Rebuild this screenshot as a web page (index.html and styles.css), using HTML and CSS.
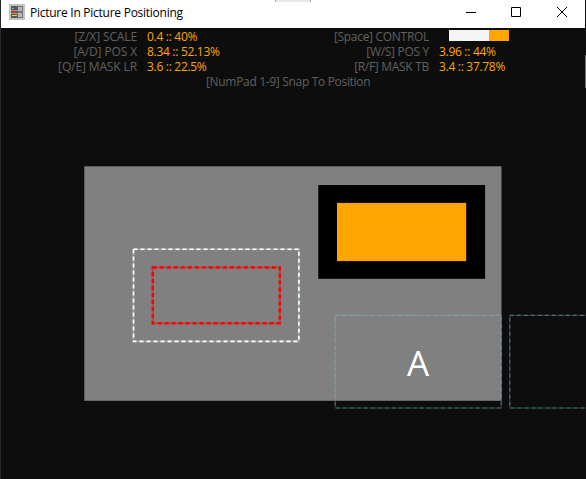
FILE: index.html
```html
<!DOCTYPE html>
<html lang="en">
<head>
<meta charset="utf-8">
<title>Picture In Picture Positioning</title>
<link rel="stylesheet" href="styles.css">
</head>
<body>
<div class="window">
  <header class="titlebar">
    <svg class="app-icon" width="16" height="16" viewBox="0 0 16 16" shape-rendering="crispEdges">
      <rect width="16" height="16" fill="#c3c3c3"/>
      <rect x="2" y="2" width="12" height="12" fill="#777"/>
      <rect x="2" y="2" width="7" height="12" fill="#5a5a5a"/>
      <path d="M9 3h4v4H9zM9 9h4v4H9z" fill="#b5b5b5"/>
      <path d="M2 6.500h7M2 9.500h7" stroke="#999"/>
      <rect x="3" y="4" width="2" height="1" fill="#20d765"/>
      <rect x="5" y="6" width="1" height="3" fill="#dc4050"/>
      <rect x="3" y="11" width="5" height="1" fill="#ffc928"/>
    </svg>
    <h1 class="title">Picture In Picture Positioning</h1>
    <svg class="controls" width="121" height="28" viewBox="0 0 121 28" fill="none" stroke="#000">
      <path d="M2 12.500h10"/>
      <path d="M47.500 7.500h9v9h-9z"/>
      <path d="M93 7l10 10M103 7l-10 10"/>
    </svg>
    <i class="notch"></i>
  </header>
  <main class="content">
    <section class="settings">
      <span class="label wide">[Z/X] SCALE</span><span class="value">0.4 :: 40%</span>
      <span class="label">[Space] CONTROL</span><span class="toggle"><i class="thumb"></i></span>
      <span class="label wide">[A/D] POS X</span><span class="value">8.34 :: 52.13%</span>
      <span class="label">[W/S] POS Y</span><span class="value">3.96 :: 44%</span>
      <span class="label wide">[Q/E] MASK LR</span><span class="value">3.6 :: 22.5%</span>
      <span class="label">[R/F] MASK TB</span><span class="value">3.4 :: 37.78%</span>
    </section>
    <p class="hint">[NumPad 1-9] Snap To Position</p>
    <svg class="stage" width="585" height="389" viewBox="1 90 585 389">
      <rect x="84.300" y="166.300" width="417.200" height="234.500" fill="#808080"/>
      <rect x="318.300" y="185" width="166.800" height="93.800" fill="#000"/>
      <rect x="337" y="202.900" width="129.200" height="58.200" fill="#ffa500"/>
      <g fill="none">
        <rect x="133.500" y="249.200" width="165.400" height="92.200" stroke="#999" stroke-width="2"/>
        <rect x="133.500" y="249.200" width="165.400" height="92.200" stroke="#fff" stroke-width="1.600" stroke-dasharray="4 3"/>
        <rect x="152.800" y="267.400" width="127" height="55.800" stroke="#a65050" stroke-width="2"/>
        <rect x="152.800" y="267.400" width="127" height="55.800" stroke="#f00" stroke-width="2.500" stroke-dasharray="4 3"/>
        <g class="slot">
          <rect x="335.200" y="315.300" width="166" height="92.700" stroke-opacity=".25"/>
          <rect x="335.200" y="315.300" width="166" height="92.700" stroke-dasharray="4 3"/>
          <rect x="509.800" y="315.300" width="166" height="92.700" stroke-opacity=".25"/>
          <rect x="509.800" y="315.300" width="166" height="92.700" stroke-dasharray="4 3"/>
        </g>
      </g>
      <text class="letter" x="418" y="376" text-anchor="middle">A</text>
    </svg>
  </main>
  <i class="edge"></i>
</div>
</body>
</html>
```
FILE: styles.css
```css
* { box-sizing: border-box; }
body {
  margin: 0;
  background: #0d0d0d;
  font-family: "Open Sans", "Noto Sans", sans-serif;
  font-size: 12px;
}
.window {
  position: relative;
  width: 586px;
  height: 479px;
  overflow: hidden;
  border-left: 1px solid #2a2a2a;
}
.titlebar {
  position: relative;
  display: flex;
  height: 28px;
  width: 584px;
  padding-left: 8px;
  background: #fff;
  color: #000;
}
.app-icon { margin-top: 4px; }
.title {
  margin: 0 0 0 5px;
  font-size: 12px;
  font-weight: 400;
  line-height: 26px;
  letter-spacing: -0.26px;
  white-space: nowrap;
}
.controls { margin-left: auto; }
.notch {
  position: absolute;
  left: 274px;
  top: 0;
  width: 36px;
  height: 2px;
  background: #e8e8ec;
  border: solid #aaa;
  border-width: 0 1px;
}
.content { display: flex; flex-direction: column; }
.settings {
  display: grid;
  grid-template-columns: 136px 156px 136px 1fr;
  grid-auto-rows: 15px;
  padding-top: 1px;
  line-height: 15px;
  letter-spacing: -0.3px;
  white-space: nowrap;
}
.label { text-align: right; color: #606060; }
.wide { letter-spacing: -0.12px; }
.value { padding-left: 10px; color: #ffa500; }
.toggle {
  display: flex;
  justify-content: flex-end;
  width: 60px;
  height: 11px;
  margin: 1px 0 0 20px;
  background: #f5f5f5;
}
.thumb { width: 20px; background: #ffa500; }
.hint {
  margin: 0;
  height: 16px;
  padding-left: 205px;
  line-height: 15px;
  letter-spacing: -0.32px;
  color: #606060;
  white-space: nowrap;
}
.stage { display: block; }
.slot { stroke: #7ab8cc; stroke-opacity: .45; stroke-width: 1.2; }
.letter { fill: #fff; font-size: 35px; }
.edge {
  position: absolute;
  right: 0;
  top: 55px;
  width: 1px;
  height: 33px;
  background: #777;
}
```
